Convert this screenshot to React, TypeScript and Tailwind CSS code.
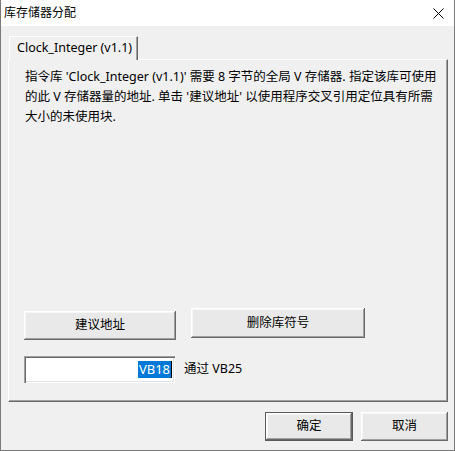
import React from "react";

const font = {
  fontFamily: '"Noto Sans", "Noto Sans CJK SC", sans-serif',
};

const btn =
  "h-[29px] bg-[#e9e9e9] text-[12.5px] text-black flex items-center justify-center shadow-[inset_-1px_-1px_#696969,inset_1px_1px_#ffffff,inset_-2px_-2px_#a0a0a0,inset_2px_2px_#f7f7f7]";

export default function App() {
  return (
    <div
      className="w-[455px] h-[451px] flex flex-col border-x border-b border-[#7a7a7a] bg-[#f0f0f0] text-black"
      style={font}
    >
      {/* Title bar */}
      <div className="h-[26px] bg-white flex items-center justify-between pl-[3px] pr-[10px]">
        <span className="text-[12px] leading-none">库存储器分配</span>
        <svg width="11" height="11" viewBox="0 0 11 11" className="text-black">
          <path d="M0.5 0.5L10.5 10.5M10.5 0.5L0.5 10.5" stroke="currentColor" strokeWidth="1" />
        </svg>
      </div>

      {/* Body */}
      <div className="flex-1 flex flex-col pl-[7px] pr-[6px] pt-[10px]">
        {/* Tab header */}
        <div className="ml-[1px] w-[129px] h-[24px] flex items-center pl-[7px] border-t border-l border-white border-r border-r-[#696969] shadow-[inset_-1px_0_#a0a0a0] text-[12.5px] relative z-10 bg-[#f0f0f0] -mb-[1px]">
          Clock_Integer (v1.1)
        </div>

        {/* Tab panel */}
        <div className="h-[343px] flex flex-col border-t border-l border-white border-r border-b border-r-[#696969] border-b-[#696969] shadow-[inset_-1px_-1px_#a0a0a0] px-[15px] pt-[7px]">
          <div className="ml-[1px] text-[12.5px] leading-[20px] whitespace-nowrap">
            <div>指令库 'Clock_Integer (v1.1)' 需要 8 字节的全局 V 存储器. 指定该库可使用</div>
            <div>的此 V 存储器量的地址. 单击 '建议地址' 以使用程序交叉引用定位具有所需</div>
            <div>大小的未使用块.</div>
          </div>

          <div className="mt-[181px] flex items-start">
            <button className={`${btn} w-[152px] mt-[3px]`}>建议地址</button>
            <button className={`${btn} w-[174px] h-[30px] ml-[15px]`}>删除库符号</button>
          </div>

          <div className="mt-[16px] flex items-center">
            <div className="w-[151px] h-[27px] bg-white flex items-center justify-end pr-[3px] shadow-[inset_1px_1px_#a0a0a0,inset_2px_2px_#696969,inset_-1px_-1px_#ffffff,inset_-2px_-2px_#e3e3e3]">
              <span className="bg-[#0078d7] text-white text-[13px] leading-[17px] px-[1px]">VB18</span>
              <span className="w-[1px] h-[17px] bg-black" />
            </div>
            <span className="ml-[9px] text-[12.5px]">通过 VB25</span>
          </div>
        </div>

        {/* Dialog buttons */}
        <div className="mt-[10px] flex justify-end gap-[8px]">
          <button className={`${btn} w-[88px] border border-[#5a5a5a]`}>确定</button>
          <button className={`${btn} w-[87px]`}>取消</button>
        </div>
      </div>
    </div>
  );
}
